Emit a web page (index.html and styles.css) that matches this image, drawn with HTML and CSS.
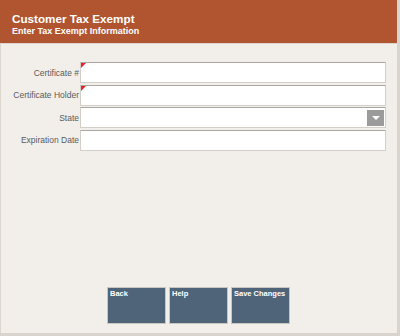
FILE: index.html
```html
<!DOCTYPE html>
<html>
<head>
<meta charset="utf-8">
<link rel="stylesheet" href="styles.css">
</head>
<body>
<div class="screen">
  <header class="header">
    <div class="title">Customer Tax Exempt</div>
    <div class="subtitle">Enter Tax Exempt Information</div>
  </header>
  <main class="body">
    <form class="form">
      <label class="label">Certificate #</label>
      <div class="field required"></div>
      <label class="label">Certificate Holder</label>
      <div class="field required"></div>
      <label class="label">State</label>
      <div class="field select"><span class="drop"><span class="arrow"></span></span></div>
      <label class="label">Expiration Date</label>
      <div class="field"></div>
    </form>
    <div class="buttons">
      <div class="btn">Back</div>
      <div class="btn">Help</div>
      <div class="btn">Save Changes</div>
    </div>
  </main>
</div>
</body>
</html>
```
FILE: styles.css
```css
html, body {
  margin: 0;
  padding: 0;
  background: #f2efeb;
}
.screen {
  width: 400px;
  height: 336px;
  box-sizing: border-box;
  display: flex;
  flex-direction: column;
  font-family: "Liberation Sans", Arial, sans-serif;
  border-right: 3px solid #d9d4ce;
  border-bottom: 3px solid #d9d4ce;
}
.header {
  height: 44px;
  background: #b0552f;
  color: #fff;
  font-weight: bold;
  padding: 13px 0 0 12px;
  box-sizing: border-box;
  border-bottom: 1px solid #ddd6cf;
  flex: none;
}
.title {
  font-size: 11.7px;
  line-height: 12px;
}
.subtitle {
  font-size: 9px;
  line-height: 12px;
}
.body {
  flex: 1;
  display: flex;
  flex-direction: column;
  border-left: 1px solid #ddd6cf;
}
.form {
  display: grid;
  grid-template-columns: 78px 306px;
  column-gap: 1px;
  row-gap: 1.5px;
  margin: 18px 0 0 0;
  align-items: center;
}
.label {
  font-size: 8.5px;
  color: #5a5a5a;
  text-align: right;
}
.field {
  height: 21px;
  box-sizing: border-box;
  background: #fff;
  border: 1px solid #d3cec8;
  border-top: 1px solid #aaa6a2;
  position: relative;
}
.required::before {
  content: "";
  position: absolute;
  left: 0;
  top: 0;
  border-top: 5px solid #ee2222;
  border-right: 5px solid transparent;
}
.select {
  display: flex;
  justify-content: flex-end;
  align-items: center;
  padding-right: 1px;
}
.drop {
  width: 17px;
  height: 16px;
  background: #9b9b9b;
  display: flex;
  align-items: center;
  justify-content: center;
}
.arrow {
  border-top: 4px solid #fff;
  border-left: 4px solid transparent;
  border-right: 4px solid transparent;
}
.buttons {
  margin-top: auto;
  margin-bottom: 9px;
  margin-left: 106px;
  display: flex;
  gap: 3px;
}
.btn {
  width: 59px;
  height: 37px;
  background: #4f6379;
  border: 1px solid #c9c6c2;
  color: #fff;
  font-size: 7.5px;
  font-weight: bold;
  padding: 1px 2px;
  box-sizing: border-box;
}
```
